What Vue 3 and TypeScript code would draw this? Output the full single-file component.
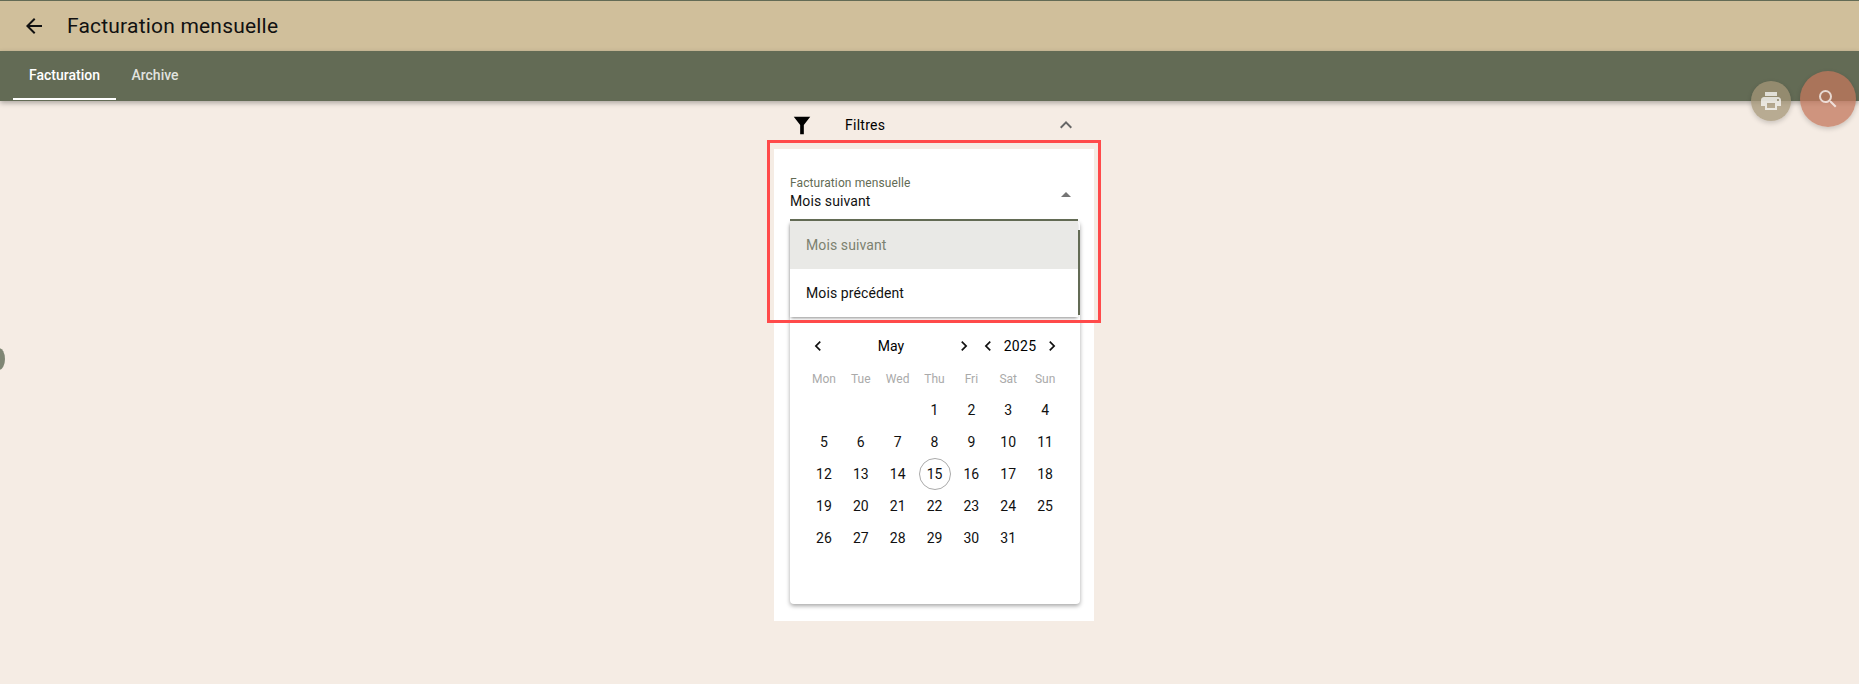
<script setup lang="ts">
const weekdays = ['Mon', 'Tue', 'Wed', 'Thu', 'Fri', 'Sat', 'Sun']
const blanks = [1, 2, 3]
const days = Array.from({ length: 31 }, (_, i) => i + 1)
</script>

<template>
  <div class="page">
    <header class="toolbar">
      <svg class="back" viewBox="0 0 24 24"><path d="M20 11H7.83l5.59-5.59L12 4l-8 8 8 8 1.41-1.41L7.83 13H20v-2z" /></svg>
      <h1>Facturation mensuelle</h1>
    </header>
    <nav class="tabs">
      <a class="tab active">Facturation</a>
      <a class="tab">Archive</a>
    </nav>

    <main class="content">
      <div class="filters">
        <svg class="funnel" viewBox="0 0 24 24"><path d="M3 3h18l-7 9v10h-4V12z" /></svg>
        <span class="filters-label">Filtres</span>
        <svg class="chevron" viewBox="0 0 24 24"><path d="M7.41 15.41 12 10.83l4.59 4.58L18 14l-6-6-6 6z" /></svg>
      </div>

      <section class="panel">
        <div class="field">
          <div class="field-text">
            <label>Facturation mensuelle</label>
            <div class="value">Mois suivant</div>
          </div>
          <span class="arrow"></span>
          <ul class="dropdown">
            <li class="selected">Mois suivant</li>
            <li>Mois précédent</li>
          </ul>
        </div>

        <div class="calendar">
          <div class="cal-head">
            <svg class="nav" viewBox="0 0 24 24"><path d="M15.41 7.41 14 6l-6 6 6 6 1.41-1.41L10.83 12z" /></svg>
            <span class="month">May</span>
            <svg class="nav" viewBox="0 0 24 24"><path d="M8.59 16.59 10 18l6-6-6-6-1.41 1.41L13.17 12z" /></svg>
            <svg class="nav prev-year" viewBox="0 0 24 24"><path d="M15.41 7.41 14 6l-6 6 6 6 1.41-1.41L10.83 12z" /></svg>
            <span class="year">2025</span>
            <svg class="nav" viewBox="0 0 24 24"><path d="M8.59 16.59 10 18l6-6-6-6-1.41 1.41L13.17 12z" /></svg>
          </div>
          <div class="grid weekdays">
            <span v-for="d in weekdays" :key="d">{{ d }}</span>
          </div>
          <div class="grid days">
            <span v-for="b in blanks" :key="'b' + b"></span>
            <span v-for="d in days" :key="d" class="day" :class="{ today: d === 15 }">{{ d }}</span>
          </div>
        </div>
      </section>
    </main>

    <div class="fab small">
      <svg viewBox="0 0 24 24"><path d="M19 8H5c-1.66 0-3 1.34-3 3v6h4v4h12v-4h4v-6c0-1.66-1.34-3-3-3zm-3 11H8v-5h8v5zm3-7c-.55 0-1-.45-1-1s.45-1 1-1 1 .45 1 1-.45 1-1 1zm-1-9H6v4h12V3z" /></svg>
    </div>
    <div class="fab large">
      <svg viewBox="0 0 24 24"><path d="M15.5 14h-.79l-.28-.27A6.47 6.47 0 0 0 16 9.5 6.5 6.5 0 1 0 9.5 16c1.61 0 3.09-.59 4.23-1.57l.27.28v.79l5 4.99L20.49 19l-4.99-5zm-6 0C7.01 14 5 11.99 5 9.5S7.01 5 9.5 5 14 7.01 14 9.5 11.99 14 9.5 14z" /></svg>
    </div>
    <div class="side-handle"></div>
    <div class="highlight"></div>
  </div>
</template>

<style>
html,
body {
  margin: 0;
  background: #f5ece4;
}
</style>

<style scoped>
.page {
  position: relative;
  width: 1859px;
  height: 684px;
  overflow: hidden;
  background: #f5ece4;
  font-family: Roboto, "Liberation Sans", sans-serif;
  color: #000;
}

.toolbar {
  height: 50px;
  border-top: 1px solid #636b55;
  background: #d0bf9b;
  display: flex;
  align-items: center;
  padding-left: 22px;
}

.back {
  width: 24px;
  height: 24px;
  fill: #111;
}

.toolbar h1 {
  margin: 0 0 0 21px;
  font-size: 21px;
  font-weight: 400;
  letter-spacing: 0.2px;
  color: #111;
}

.tabs {
  position: relative;
  height: 50px;
  background: #636b55;
  display: flex;
  padding-left: 13px;
  box-shadow: 0 2px 5px rgba(0, 0, 0, 0.3);
}

.tab {
  width: 103px;
  height: 49px;
  box-sizing: border-box;
  display: flex;
  align-items: center;
  justify-content: center;
  padding-bottom: 1px;
  font-size: 14px;
  font-weight: 500;
  color: rgba(255, 255, 255, 0.82);
}

.tab.active {
  color: #fff;
  border-bottom: 2px solid #fff;
  padding-bottom: 0;
}

.tab + .tab {
  width: 78px;
}

.content {
  width: 320px;
  margin-left: 774px;
}

.filters {
  height: 48px;
  display: flex;
  align-items: center;
  box-sizing: border-box;
}

.funnel {
  width: 22px;
  height: 22px;
  margin-left: 17px;
  fill: #000;
}

.filters-label {
  margin-left: 32px;
  font-size: 14px;
  font-weight: 400;
  letter-spacing: 0.25px;
}

.chevron {
  width: 24px;
  height: 24px;
  margin-left: auto;
  margin-right: 16px;
  fill: #666;
}

.panel {
  background: #fff;
  padding: 0 14px 17px 16px;
  height: 472px;
  box-sizing: border-box;
  display: flex;
  flex-direction: column;
}

.field {
  position: relative;
  height: 72px;
  width: 288px;
  flex: none;
  box-sizing: border-box;
  border-bottom: 2px solid #636b55;
  padding-top: 28px;
  display: flex;
  justify-content: space-between;
}

.field label {
  display: block;
  font-size: 12px;
  line-height: 12px;
  letter-spacing: 0.1px;
  color: #636b55;
}

.value {
  margin-top: 2px;
  font-size: 14px;
  line-height: 20px;
  letter-spacing: 0.1px;
  color: #111;
}

.arrow {
  margin: 15px 7px 0 0;
  width: 0;
  height: 0;
  border-left: 5px solid transparent;
  border-right: 5px solid transparent;
  border-bottom: 5px solid #757575;
}

.dropdown {
  position: absolute;
  left: 0;
  top: 72px;
  width: 288px;
  margin: 0;
  padding: 0;
  list-style: none;
  background: #fff;
  box-shadow: 0 2px 3px -1px rgba(0, 0, 0, 0.45);
  z-index: 2;
}

.dropdown::after {
  content: "";
  position: absolute;
  right: -2px;
  top: 9px;
  bottom: 2px;
  width: 2px;
  background: #636b55;
}

.dropdown li {
  height: 48px;
  display: flex;
  align-items: center;
  padding-left: 16px;
  font-size: 14px;
  letter-spacing: 0.1px;
  color: #111;
}

.dropdown li.selected {
  background: #e9e9e6;
  color: #7c8170;
}

.calendar {
  width: 290px;
  flex: 1;
  padding-top: 113px;
  box-sizing: border-box;
  background: #fff;
  border-radius: 4px;
  box-shadow: 0 2px 4px rgba(0, 0, 0, 0.35);
}

.cal-head {
  display: flex;
  align-items: center;
  height: 24px;
  padding-left: 18px;
  font-size: 14px;
}

.nav {
  width: 20px;
  height: 20px;
  fill: #111;
  flex: none;
}

.month {
  width: 126px;
  text-align: center;
}

.prev-year {
  margin-left: 4px;
}

.year {
  width: 44px;
  text-align: center;
  letter-spacing: 0.3px;
}

.grid {
  display: grid;
  grid-template-columns: repeat(7, 36.86px);
  padding-left: 15.5px;
  text-align: center;
}

.weekdays {
  margin-top: 9px;
  height: 24px;
  line-height: 24px;
  font-size: 12px;
  color: #aaa;
}

.days {
  margin-top: 3px;
  grid-auto-rows: 32px;
  font-size: 14px;
  color: #111;
}

.day {
  display: flex;
  align-items: center;
  justify-content: center;
}

.today::before {
  content: "";
  position: absolute;
  width: 30px;
  height: 30px;
  border: 1px solid #aaa;
  border-radius: 50%;
}

.fab {
  position: absolute;
  border-radius: 50%;
  display: flex;
  align-items: center;
  justify-content: center;
  box-shadow: 0 2px 5px rgba(0, 0, 0, 0.18);
  z-index: 3;
}

.fab svg {
  width: 24px;
  height: 24px;
  fill: rgba(255, 255, 255, 0.72);
}

.fab.small {
  left: 1751px;
  top: 81px;
  width: 40px;
  height: 40px;
  background: rgba(164, 150, 120, 0.76);
}

.fab.large {
  left: 1800px;
  top: 71px;
  width: 56px;
  height: 56px;
  background: rgba(193, 119, 92, 0.75);
}

.side-handle {
  position: absolute;
  left: -7px;
  top: 348px;
  width: 12px;
  height: 22px;
  border-radius: 50%;
  background: #7f8674;
}

.highlight {
  position: absolute;
  left: 767px;
  top: 140px;
  width: 334px;
  height: 183px;
  box-sizing: border-box;
  border: 3px solid #ff4a4a;
  z-index: 4;
}
</style>
